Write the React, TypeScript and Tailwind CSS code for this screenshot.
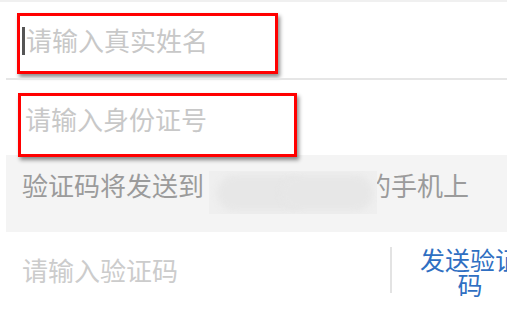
import React from "react";

const FONT = { fontFamily: '"Noto Sans CJK SC", "Noto Sans", sans-serif' };

function Blob() {
  // 打码区域
  return (
    <div className="relative shrink-0 ml-[5px] w-[168px] h-[43px] mt-[2px] bg-[#efefef] overflow-hidden">
      <div className="absolute left-[8px] top-[4px] w-[90px] h-[36px] rounded-full bg-[#e7e7e7] blur-[3px]" />
      <div className="absolute left-[72px] top-[4px] w-[92px] h-[36px] rounded-full bg-[#e7e7e7] blur-[3px]" />
    </div>
  );
}

export default function App() {
  return (
    <div className="w-[507px] h-[310px] overflow-hidden bg-white" style={FONT}>
      {/* 顶部分隔线 */}
      <div className="h-[2px] bg-[#f0f0f0]" />

      {/* 姓名 */}
      <div className="h-[76px] pt-[11px]">
        <div className="ml-[17px] w-[261px] h-[61px] border-[3px] border-[#ff0000] shadow-[2px_3px_4px_rgba(0,0,0,0.45)] flex items-start gap-[1px] pt-[9px] pl-[2px]">
          <span className="w-[3px] h-[28px] mt-[2px] bg-[#555555]" />
          <span className="text-[26px] leading-[32px] text-[#c8c8c8] -mt-[1px]">请输入真实姓名</span>
        </div>
      </div>
      <div className="ml-[6px] h-[2px] bg-[#e6e6e6]" />

      {/* 身份证 */}
      <div className="h-[75px] pt-[13px]">
        <div className="relative z-10 ml-[18px] w-[279px] h-[64px] border-[3px] border-[#ff0000] shadow-[2px_3px_4px_rgba(0,0,0,0.45)] pt-[7px] pl-[4px]">
          <span className="text-[26px] leading-[32px] text-[#c8c8c8]">请输入身份证号</span>
        </div>
      </div>

      {/* 提示 */}
      <div className="ml-[6px] h-[77px] bg-[#f4f4f4] pl-[16px] pt-[14px] flex items-start text-[26px] leading-[32px] text-[#9b9b9b] whitespace-nowrap">
        <span className="shrink-0">验证码将发送到</span>
        <Blob />
        <span className="shrink-0 -ml-[12px]">的手机上</span>
      </div>

      {/* 验证码 */}
      <div className="flex items-start h-[78px] pt-[15px]">
        <span className="shrink-0 pl-[22px] w-[390px] pt-[7px] text-[26px] leading-[32px] text-[#cccccc]">请输入验证码</span>
        <div className="shrink-0 w-[2px] h-[46px] bg-[#e3e3e3]" />
        <div className="shrink-0 w-[104px] ml-[26px] text-center text-[25px] leading-[25px] text-[#2f6fc2] break-all">
          发送验证码
        </div>
      </div>
    </div>
  );
}
